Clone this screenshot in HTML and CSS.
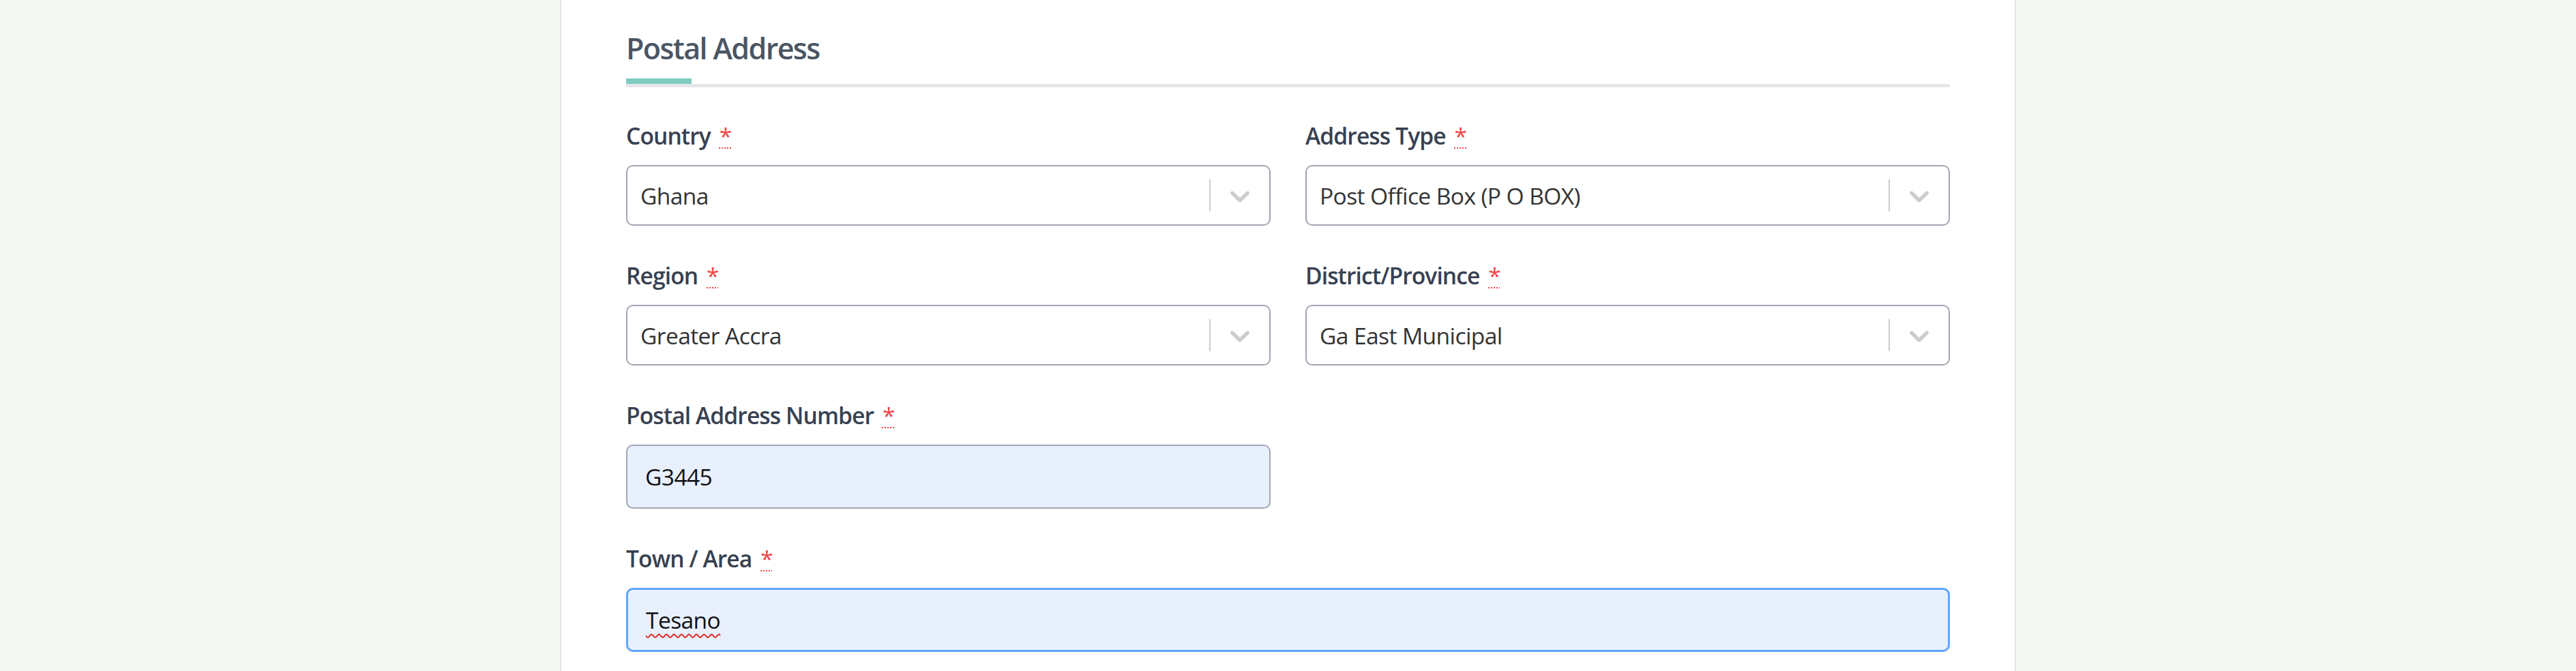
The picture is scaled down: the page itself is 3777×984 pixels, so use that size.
FILE: index.html
```html
<!DOCTYPE html>
<html lang="en">
<head>
<meta charset="utf-8">
<title>Postal Address</title>
<link rel="stylesheet" href="styles.css">
</head>
<body>
<main class="page">
  <section class="card">
    <header class="section-head">
      <h2 class="section-title">Postal Address</h2>
    </header>
    <form class="form-grid">
      <div class="field">
        <label class="field-label">Country <abbr class="req" title="required">*</abbr></label>
        <div class="select">
          <div class="select-value">Ghana</div>
          <div class="select-indicators">
            <span class="select-sep"></span>
            <span class="select-arrow"><svg viewBox="0 0 20 20" aria-hidden="true"><path d="M4.516 7.548c0.436-0.446 1.043-0.481 1.576 0l3.908 3.747 3.908-3.747c0.533-0.481 1.141-0.446 1.574 0 0.436 0.445 0.408 1.197 0 1.615-0.406 0.418-4.695 4.502-4.695 4.502-0.217 0.223-0.502 0.335-0.787 0.335s-0.57-0.112-0.789-0.335c0 0-4.287-4.084-4.695-4.502s-0.436-1.170 0-1.615z"/></svg></span>
          </div>
        </div>
      </div>
      <div class="field">
        <label class="field-label">Address Type <abbr class="req" title="required">*</abbr></label>
        <div class="select">
          <div class="select-value">Post Office Box (P O BOX)</div>
          <div class="select-indicators">
            <span class="select-sep"></span>
            <span class="select-arrow"><svg viewBox="0 0 20 20" aria-hidden="true"><path d="M4.516 7.548c0.436-0.446 1.043-0.481 1.576 0l3.908 3.747 3.908-3.747c0.533-0.481 1.141-0.446 1.574 0 0.436 0.445 0.408 1.197 0 1.615-0.406 0.418-4.695 4.502-4.695 4.502-0.217 0.223-0.502 0.335-0.787 0.335s-0.57-0.112-0.789-0.335c0 0-4.287-4.084-4.695-4.502s-0.436-1.170 0-1.615z"/></svg></span>
          </div>
        </div>
      </div>
      <div class="field">
        <label class="field-label">Region <abbr class="req" title="required">*</abbr></label>
        <div class="select">
          <div class="select-value">Greater Accra</div>
          <div class="select-indicators">
            <span class="select-sep"></span>
            <span class="select-arrow"><svg viewBox="0 0 20 20" aria-hidden="true"><path d="M4.516 7.548c0.436-0.446 1.043-0.481 1.576 0l3.908 3.747 3.908-3.747c0.533-0.481 1.141-0.446 1.574 0 0.436 0.445 0.408 1.197 0 1.615-0.406 0.418-4.695 4.502-4.695 4.502-0.217 0.223-0.502 0.335-0.787 0.335s-0.57-0.112-0.789-0.335c0 0-4.287-4.084-4.695-4.502s-0.436-1.170 0-1.615z"/></svg></span>
          </div>
        </div>
      </div>
      <div class="field">
        <label class="field-label">District/Province <abbr class="req" title="required">*</abbr></label>
        <div class="select">
          <div class="select-value">Ga East Municipal</div>
          <div class="select-indicators">
            <span class="select-sep"></span>
            <span class="select-arrow"><svg viewBox="0 0 20 20" aria-hidden="true"><path d="M4.516 7.548c0.436-0.446 1.043-0.481 1.576 0l3.908 3.747 3.908-3.747c0.533-0.481 1.141-0.446 1.574 0 0.436 0.445 0.408 1.197 0 1.615-0.406 0.418-4.695 4.502-4.695 4.502-0.217 0.223-0.502 0.335-0.787 0.335s-0.57-0.112-0.789-0.335c0 0-4.287-4.084-4.695-4.502s-0.436-1.170 0-1.615z"/></svg></span>
          </div>
        </div>
      </div>
      <div class="field">
        <label class="field-label" for="postal-number">Postal Address Number <abbr class="req" title="required">*</abbr></label>
        <input class="text-input" id="postal-number" type="text" value="G3445">
      </div>
      <div class="field field-wide">
        <label class="field-label">Town / Area <abbr class="req" title="required">*</abbr></label>
        <div class="text-input is-focused" role="textbox"><span class="misspelled">Tesano</span></div>
      </div>
    </form>
  </section>
</main>
</body>
</html>
```

FILE: styles.css
```css
* {
  box-sizing: border-box;
}

html, body {
  margin: 0;
  padding: 0;
}

body {
  background: #f4f9f3;
  font-family: "Segoe UI", "Open Sans", "Noto Sans", sans-serif;
  color: #374151;
  height: 984px;
  overflow: hidden;
}

.page {
  display: flex;
  justify-content: center;
}

.card {
  width: 2135px;
  min-height: 984px;
  background: #ffffff;
  border-left: 2px solid #e4e5ea;
  border-right: 2px solid #e4e5ea;
  padding: 44px 95px 0;
}

.section-head {
  position: relative;
  padding-bottom: 25px;
  border-bottom: 5px solid #e5e7eb;
}

.section-head::after {
  content: "";
  position: absolute;
  left: 0;
  bottom: 0;
  width: 96px;
  height: 8px;
  background: #80cbc0;
}

.section-title {
  margin: 0;
  font-size: 43px;
  line-height: 54px;
  font-weight: 600;
  color: #4b5563;
  letter-spacing: -1.6px;
}

.form-grid {
  display: grid;
  grid-template-columns: 1fr 1fr;
  column-gap: 51px;
  row-gap: 48px;
  margin-top: 46px;
}

.field {
  display: flex;
  flex-direction: column;
}

.field-wide {
  grid-column: 1 / -1;
}

.field-label {
  font-size: 33.6px;
  line-height: 50px;
  font-weight: 600;
  color: #374151;
  margin-bottom: 18px;
  letter-spacing: -0.9px;
}

.req {
  color: #ef4444;
  margin-left: 5px;
  text-decoration: underline dotted #ef4444;
  text-decoration-thickness: 2px;
  text-underline-offset: 4px;
  font-weight: 400;
}

.select {
  display: flex;
  align-items: stretch;
  height: 89px;
  border: 2.4px solid #a2a8b2;
  border-radius: 10px;
  background: #ffffff;
}

.select-value {
  flex: 1;
  display: flex;
  align-items: center;
  padding: 0 19px;
  font-size: 33.6px;
  color: #333333;
  letter-spacing: -0.6px;
}

.select-indicators {
  display: flex;
  align-items: stretch;
}

.select-sep {
  width: 2.4px;
  margin: 19px 0;
  background: #cccccc;
}

.select-arrow {
  display: flex;
  align-items: center;
  padding: 0 19px;
}

.select-arrow svg {
  width: 48px;
  height: 48px;
  fill: #cccccc;
  display: block;
}

.text-input {
  display: flex;
  align-items: center;
  width: 100%;
  height: 94px;
  padding: 0 26px;
  border: 2.4px solid #a2a8b2;
  border-radius: 10px;
  background: #e8f0fe;
  font-family: inherit;
  font-size: 33.6px;
  color: #111111;
  letter-spacing: -0.6px;
  outline: none;
}

.text-input.is-focused {
  border: 3px solid #60a5fa;
}

.misspelled {
  text-decoration: underline wavy #e0201e;
  text-decoration-thickness: 2px;
  text-underline-offset: 7px;
}
```
